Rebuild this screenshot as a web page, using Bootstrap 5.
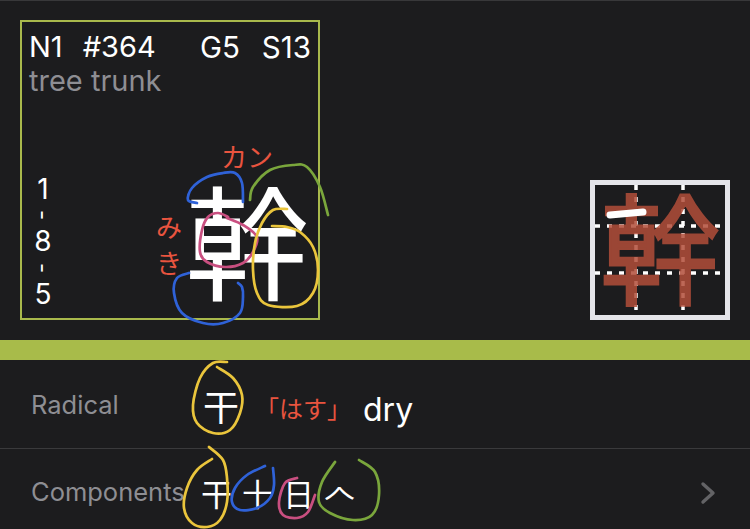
<!DOCTYPE html>
<html lang="ja"><head><meta charset="utf-8">
<link href="https://cdn.jsdelivr.net/npm/bootstrap@5.3.0/dist/css/bootstrap.min.css" rel="stylesheet">
<style>
html,body{height:100%;}
body{background:#1c1c1e;color:#fff;font-family:"Inter","Noto Sans CJK JP",sans-serif;overflow:hidden;position:relative;width:750px;height:529px;}
.jp{font-family:"Noto Sans CJK JP","Noto Sans CJK SC",sans-serif;}
.top-area{height:340px;border-top:1px solid #38383a;padding:19px 20px 20px 20px;}
.kanji-box{width:300px;height:300px;border:2px solid #a9b94c;padding:7px 7px 0 7px;line-height:1.2;font-size:29px;}
.stats{height:35px;line-height:36px;}
.stats-left{gap:20px;}
.stats-right{gap:22px;font-size:29.5px;}
.meaning{color:#8e8e93;line-height:33px;}
.strokes-col{width:30px;margin-left:-1px;font-size:28px;line-height:26.5px;text-align:center;padding-bottom:11px;}
.strokes-col .dashmark{font-size:22px;line-height:26px;display:block;transform:rotate(90deg);}
.big-kanji{font-size:124px;line-height:1;width:128px;margin-right:0;font-weight:400;text-align:center;padding-bottom:19px;}
.order-box{width:140px;height:140px;border:5px solid #e5e5ea;position:relative;}
.order-grid{position:absolute;inset:0;width:130px;height:130px;}
.order-kanji{position:absolute;inset:0;font-size:120px;line-height:118px;text-align:center;color:#b24e3a;-webkit-text-stroke:2.5px #b24e3a;opacity:.85;}
.band{height:20px;background:#a8bb4a;}
.info-row{padding-left:31px;padding-right:34px;}
.row-radical{height:89px;border-bottom:1px solid #3a3a3c;}
.row-comp{height:80px;padding-top:7px;}
.row-label{color:#8e8e93;font-size:25.5px;width:170px;flex:none;}
.label-radical{margin-top:3px;}
.rad-char{font-size:36px;width:40px;line-height:1;text-align:center;margin-top:2px;}
.reading{color:#e9543f;font-size:24px;margin-left:14px;margin-top:7px;}
.gloss{font-size:32px;margin-left:12px;margin-top:11px;}
.comp-list{font-size:31px;margin-left:0;gap:10px;line-height:1;}
.ink{position:absolute;left:0;top:0;width:750px;height:529px;pointer-events:none;}
.hand{position:absolute;color:#e9543f;font-size:26px;line-height:1;white-space:nowrap;font-weight:400;}
.hand-kan{left:221px;top:143px;}
.hand-mi{left:156px;top:213px;}
.hand-ki{left:156px;top:249px;}
</style></head>
<body>
<div class="top-area d-flex justify-content-between align-items-end">
  <div class="kanji-box d-flex flex-column">
    <div class="stats d-flex justify-content-between"><span class="d-flex stats-left"><span>N1</span><span>#364</span></span><span class="d-flex stats-right"><span>G5</span><span>S13</span></span></div>
    <div class="meaning">tree trunk</div>
    <div class="d-flex justify-content-between align-items-end mt-auto">
      <div class="strokes-col">1<span class="dashmark">-</span>8<span class="dashmark">-</span>5</div>
      <div class="big-kanji jp">幹</div>
    </div>
  </div>
  <div class="order-box" id="order">
    <svg class="order-grid" viewBox="0 0 130 130"><g stroke="#fff" stroke-width="3.5" stroke-dasharray="5 7" fill="none"><path d="M41 0V130M88 0V130M0 41H130M0 88H130"/></g></svg>
    <div class="order-kanji jp">幹</div>
    <svg class="order-grid" viewBox="0 0 130 130"><path d="M15 30L48 27" stroke="#fff" stroke-width="7" stroke-linecap="round"/></svg>
  </div>
</div>
<div class="band"></div>
<div class="info-row row-radical d-flex align-items-center">
  <div class="row-label label-radical">Radical</div>
  <div class="rad-char jp">干</div>
  <div class="reading jp">「はす」</div>
  <div class="gloss">dry</div>
</div>
<div class="info-row row-comp d-flex align-items-center">
  <div class="row-label">Components</div>
  <div class="comp-list jp d-flex"><span>干</span><span>十</span><span>日</span><span>𠆢</span></div>
  <svg class="ms-auto" width="16" height="24" viewBox="0 0 16 24"><path d="M3 3L13 12L3 21" fill="none" stroke="#636366" stroke-width="3.4" stroke-linecap="round" stroke-linejoin="round"/></svg>
</div>
<svg class="ink" viewBox="0 0 750 529" fill="none" stroke-width="2.7" stroke-linecap="round" stroke-linejoin="round" id="ink"></svg>
<div class="hand jp hand-kan">カン</div>
<div class="hand jp hand-mi">み</div>
<div class="hand jp hand-ki">き</div>
<script>
var strokes=[
["#2f62d8","197,203 188,200 192,188 207,177 223,173 235,173 242,183 243,202"],
["#2f62d8","189,273 177,278 174,293 182,313 203,323 223,323 240,313 243,297 242,287 238,283"],
["#7aa63c","250,200 253,187 270,170 293,165 307,167 320,187 328,215"],
["#c94f80","228,217 218,213 208,217 202,230 200,252 207,262 225,267 243,263 253,252 257,237 243,225 227,218"],
["#eac53c","287,209 273,210 262,223 255,243 253,270 257,293 268,305 297,306 313,293 318,270 313,247 300,232 287,227 272,226"],
["#eac53c","227,362 213,363 200,378 193,405 197,423 213,433 230,430 240,413 242,395 233,378 217,367"],
["#eac53c","209,447 223,460 227,478 227,502 220,520 207,527 192,523 184,508 187,488 197,470 212,459"],
["#2f62d8","265,466 247,475 235,488 232,502 240,510 257,508 270,498 274,485 273,468"],
["#c94f80","297,478 285,483 279,502 283,515 297,518 308,512 315,495"],
["#7aa63c","335,462 322,482 319,502 330,513 353,520 372,515 379,495 375,472 359,460"]];
var out="";
strokes.forEach(function(s){
  var p=s[1].split(" ").map(function(a){return a.split(",").map(Number);});
  var d="M"+p[0][0]+" "+p[0][1];
  for(var i=0;i<p.length-1;i++){
    var a=p[Math.max(i-1,0)],b=p[i],c=p[i+1],e=p[Math.min(i+2,p.length-1)];
    d+="C"+(b[0]+(c[0]-a[0])/6)+" "+(b[1]+(c[1]-a[1])/6)+" "+(c[0]-(e[0]-b[0])/6)+" "+(c[1]-(e[1]-b[1])/6)+" "+c[0]+" "+c[1];
  }
  out+='<path stroke="'+s[0]+'" d="'+d+'"/>';
});
document.getElementById("ink").innerHTML=out;
</script>
<script src="https://cdn.jsdelivr.net/npm/bootstrap@5.3.0/dist/js/bootstrap.bundle.min.js"></script>
</body></html>
